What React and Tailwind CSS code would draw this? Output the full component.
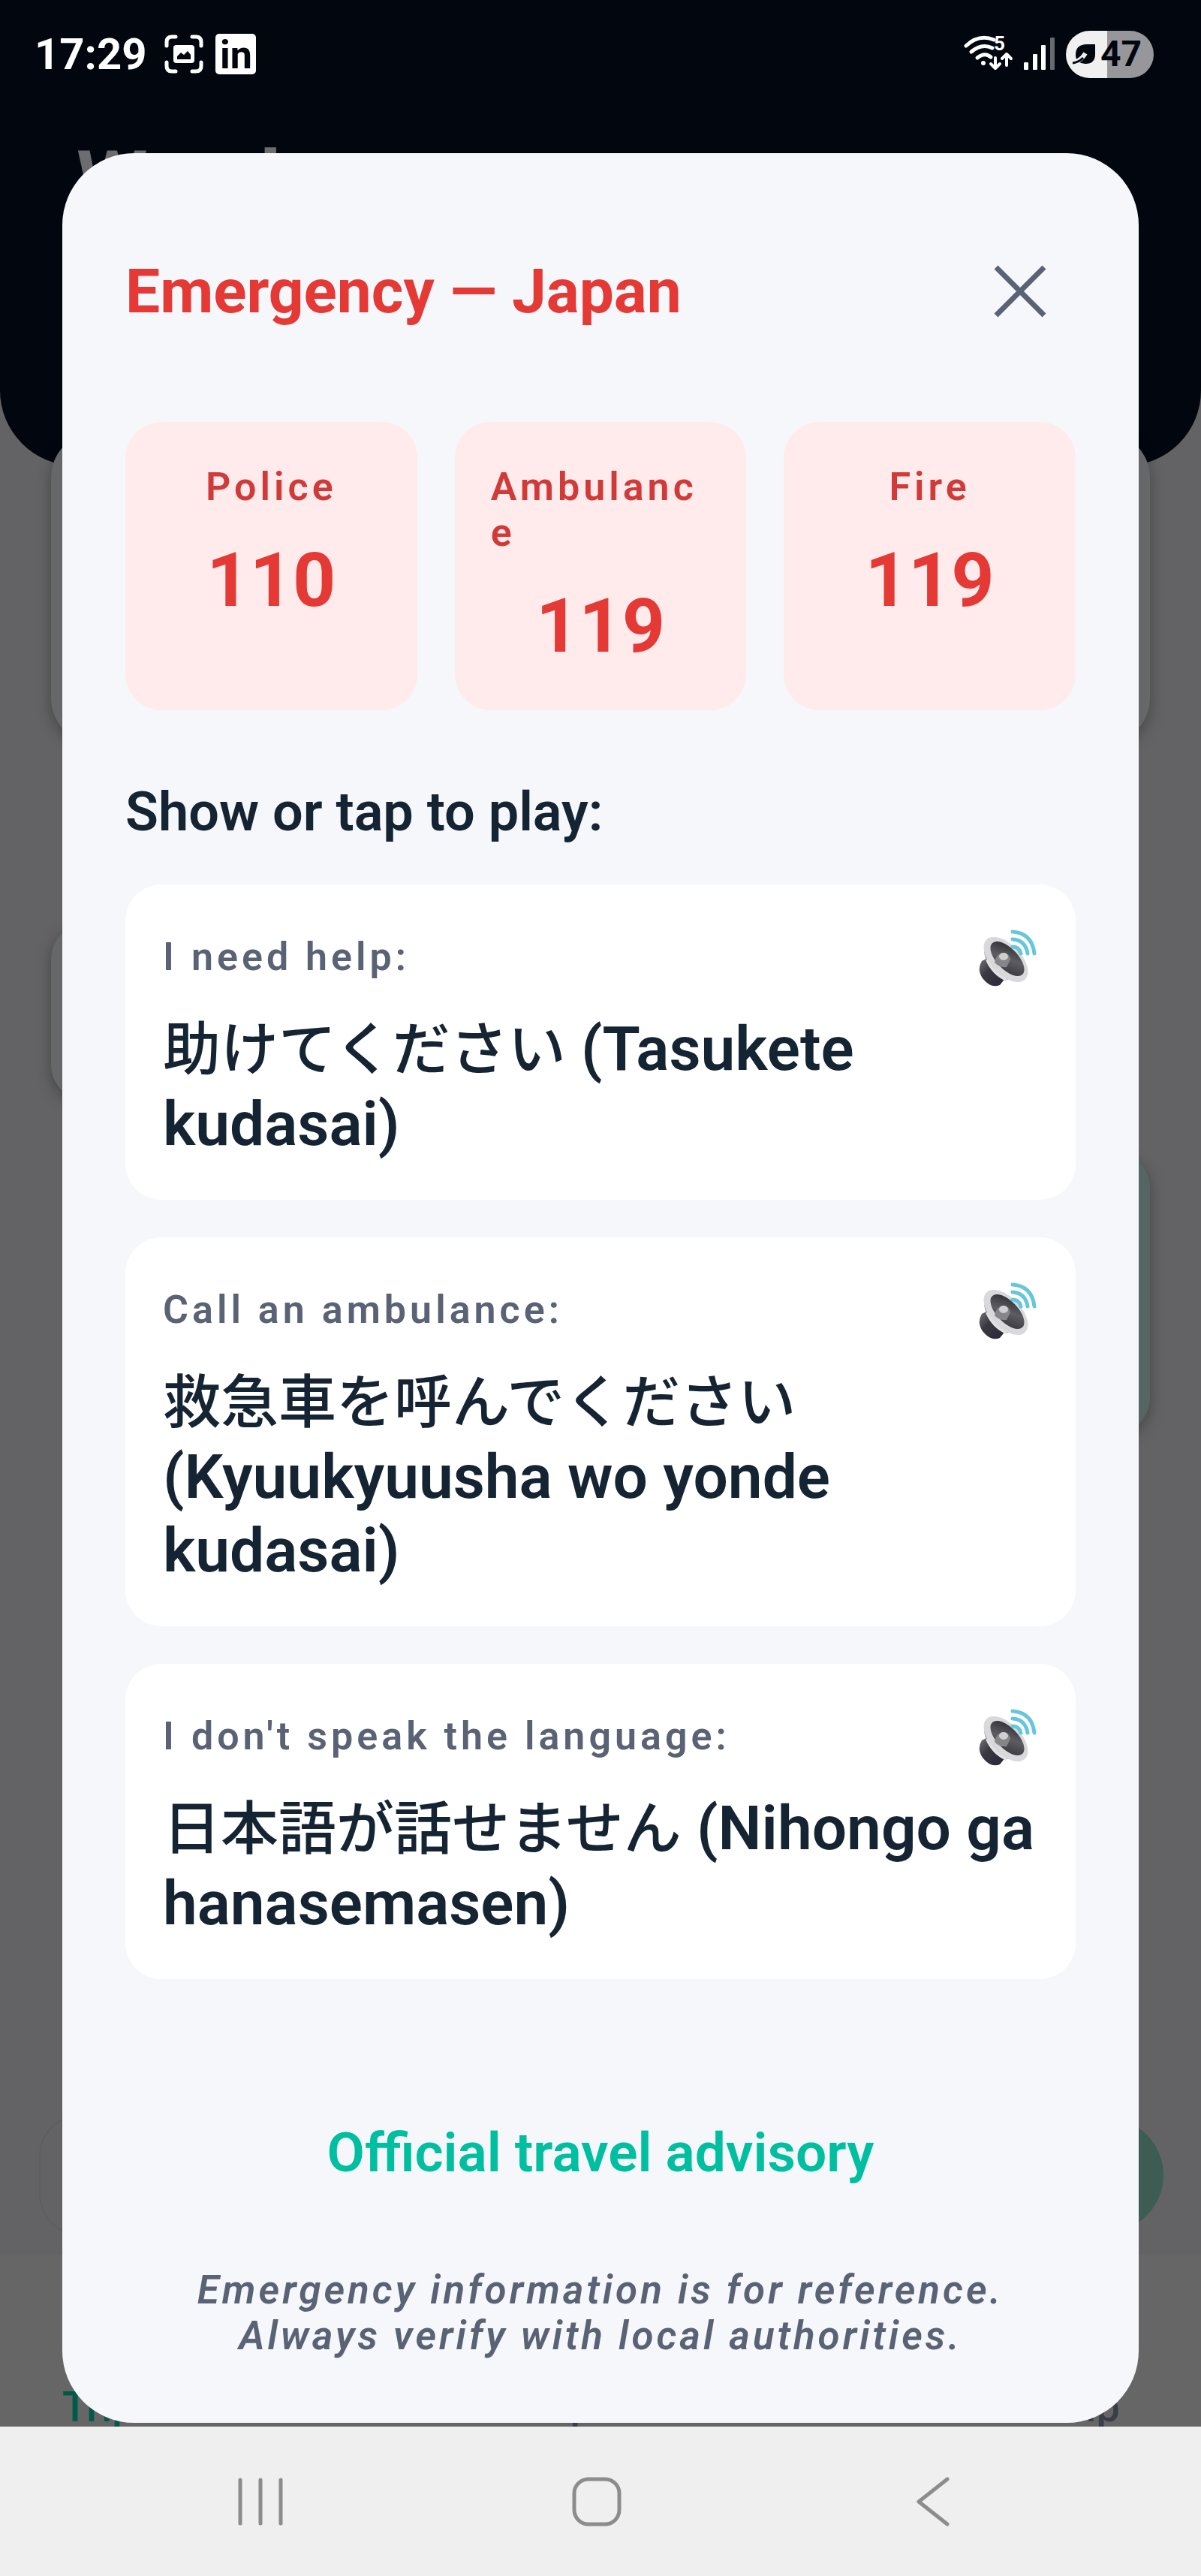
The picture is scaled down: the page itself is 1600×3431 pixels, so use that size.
const numbers = [
  { label: "Police", value: "110" },
  { label: "Ambulance", value: "119" },
  { label: "Fire", value: "119" },
];

const phrases = [
  { label: "I need help:", ja: "助けてください", romaji: "(Tasukete kudasai)" },
  { label: "Call an ambulance:", ja: "救急車を呼んでください", romaji: "(Kyuukyuusha wo yonde kudasai)" },
  { label: "I don't speak the language:", ja: "日本語が話せません", romaji: "(Nihongo ga hanasemasen)" },
];

function ScreenshotIcon() {
  return (
    <svg viewBox="0 0 52 52" className="size-[52px]" fill="none" stroke="#fff" strokeWidth="5" strokeLinecap="round">
      <path d="M3 15V10Q3 3 10 3H15M37 3H42Q49 3 49 10V15M49 37V42Q49 49 42 49H37M15 49H10Q3 49 3 42V37" />
      <rect x="12" y="14" width="28" height="24" rx="4" fill="#fff" stroke="none" />
      <path d="M17 33V29L22 24L26 27L31 22L35 27V33Z" fill="#02060f" stroke="none" />
    </svg>
  );
}

function WifiIcon() {
  return (
    <div className="relative">
      <svg viewBox="0 0 66 50" className="h-[50px] w-[66px]" fill="none" stroke="#fff" strokeWidth="5" strokeLinecap="round" strokeLinejoin="round">
        <path d="M3 14Q20 -2 40 6" />
        <path d="M10 22Q24 10 38 17" />
        <path d="M18 30Q28 22 36 29" />
        <circle cx="26" cy="37" r="3" fill="#fff" stroke="none" />
        <path d="M42 30V43M36 38L42 44L48 38" strokeWidth="4" />
        <path d="M57 40V27M51 31L57 25L63 31" strokeWidth="4" />
      </svg>
      <span className="absolute top-0 left-10 text-[26px] leading-[22px] font-bold">5</span>
    </div>
  );
}

function SpeakerIcon() {
  return (
    <svg viewBox="0 0 80 80" className="size-20">
      <defs>
        <linearGradient id="cone" x1="0" y1="0" x2="1" y2="1">
          <stop offset="0" stopColor="#26262b" />
          <stop offset="0.5" stopColor="#5c5c62" />
          <stop offset="1" stopColor="#303036" />
        </linearGradient>
        <linearGradient id="magnet" x1="0" y1="0" x2="1" y2="1">
          <stop offset="0" stopColor="#77777c" />
          <stop offset="0.4" stopColor="#3a3940" />
          <stop offset="1" stopColor="#28253a" />
        </linearGradient>
      </defs>
      <path d="M5 44Q-2 55 6 67Q17 81 29 76L37 66L15 39Z" fill="url(#magnet)" />
      <path d="M8 32Q12 58 38 69L52 68L16 26Z" fill="#a3a3a8" />
      <path d="M12 42Q20 61 38 69" stroke="#e2e2e5" strokeWidth="4" fill="none" />
      <ellipse cx="37" cy="42" rx="37" ry="20" transform="rotate(46 37 42)" fill="#d9d9db" />
      <ellipse cx="39" cy="41" rx="29" ry="14" transform="rotate(46 39 41)" fill="url(#cone)" />
      <path d="M22 46Q24 34 34 33Q42 34 43 42L38 52Q28 53 22 46Z" fill="#85858a" />
      <ellipse cx="34" cy="38" rx="6" ry="5" fill="#cfcfd2" />
      <g fill="none" stroke="#68c6da" strokeWidth="5" strokeLinecap="round">
        <path d="M46 25Q55 25 57 34" />
        <path d="M46 15Q63 16 66 34" />
        <path d="M46 5Q72 7 75 34" />
      </g>
    </svg>
  );
}

function StatusBar() {
  return (
    <div className="flex h-[144px] items-center justify-between pr-[63px] pl-[46px] text-white">
      <div className="flex items-center gap-6">
        <span className="text-[58px] leading-none font-bold">17:29</span>
        <div className="flex items-center gap-4">
          <ScreenshotIcon />
          <span className="flex h-[54px] w-[54px] items-end justify-center rounded-[5px] bg-white text-[52px] leading-[50px] font-bold text-[#02060f]">in</span>
        </div>
      </div>
      <div className="flex items-center gap-[14px]">
        <WifiIcon />
        <svg viewBox="0 0 42 44" className="h-11 w-[42px]" fill="#fff">
          <rect x="0" y="33" width="6" height="10" rx="1" />
          <rect x="12" y="22" width="6" height="21" rx="1" />
          <rect x="23" y="10" width="6" height="33" rx="1" />
          <rect x="35" y="0" width="6" height="43" rx="1" opacity="0.4" />
        </svg>
        <div className="flex h-[63px] w-[117px] items-center gap-[6px] rounded-full bg-linear-to-r from-[#f0f0f0] from-47% to-[#97979b] to-47% pl-2">
          <svg viewBox="0 0 32 28" className="h-7 w-8">
            <path d="M31 1V14Q31 27 18 27Q5 26 5 15Q5 1 20 1Z" fill="#02060f" />
            <path d="M1 26Q12 23 18 13" stroke="#f0f0f0" strokeWidth="6" fill="none" />
            <path d="M1 26Q9 25 15 19" stroke="#02060f" strokeWidth="3" fill="none" />
          </svg>
          <span className="text-[48px] leading-none font-bold text-[#02060f]">47</span>
        </div>
      </div>
    </div>
  );
}

// the home screen, dimmed behind the dialog
function Backdrop() {
  return (
    <div aria-hidden="true" className="absolute inset-0 flex flex-col bg-[#636365]">
      <div className="h-[620px] rounded-b-[100px] bg-[#02060f] px-[102px] pt-[180px]">
        <p className="text-[108px] leading-[120px] font-bold text-[#6d6d70]">Wander</p>
      </div>
      <div className="mx-[68px] -mt-[44px] h-[414px] rounded-[60px] bg-[#666768] shadow-[0_6px_20px_rgba(0,0,0,0.3)]" />
      <div className="mt-[240px] mr-[50%] ml-[68px] h-[236px] rounded-[48px] bg-[#666768] shadow-[0_6px_20px_rgba(0,0,0,0.3)]" />
      <div className="mt-[68px] mr-[68px] ml-[50%] h-[376px] rounded-[48px] bg-[#556563] shadow-[0_6px_20px_rgba(0,0,0,0.3)]" />
      <div className="grow" />
      <div className="mb-[25px] flex items-center justify-between pr-[50px] pl-[52px]">
        <div className="h-[162px] w-3/4 rounded-[56px] border-2 border-[#5e5e61]" />
        <div className="size-[152px] rounded-full bg-[#3c5c54]" />
      </div>
      <div className="flex h-[229px] items-end justify-between bg-[#666] pr-[108px] pl-[83px] text-[56px] leading-[52px] font-medium text-[#3a3e4a]">
        <span className="text-[#005a4a]">Trips</span>
        <span>Explore</span>
        <span>Help</span>
      </div>
    </div>
  );
}

function NumberCard({ label, value }) {
  return (
    <a href={`tel:${value}`} className="flex flex-1 basis-0 flex-col items-center rounded-[48px] bg-[#ffebec] px-[48px] pt-[56px] pb-[50px]">
      <span className="text-[52px] leading-[61px] font-semibold tracking-[5px] break-all text-[#d03a38]">{label}</span>
      <span className="mt-8 text-[100px] leading-[124px] font-bold text-[#e53935]">{value}</span>
    </a>
  );
}

function PhraseCard({ label, ja, romaji }) {
  return (
    <button type="button" className="block w-full rounded-[48px] bg-white px-[50px] pt-[58px] pb-[52px] text-left">
      <span className="flex items-start justify-between">
        <span className="pt-2 text-[52px] leading-[61px] font-semibold tracking-[5px] text-[#5a6275]">{label}</span>
        <SpeakerIcon />
      </span>
      <span className="mt-8 block text-[82px] leading-[98px] font-semibold text-[#152433]">
        <span lang="ja" className="text-[77px] font-medium">{ja}</span> {romaji}
      </span>
    </button>
  );
}

function EmergencyDialog() {
  return (
    <section role="dialog" aria-label="Emergency numbers" className="mx-[83px] mt-[60px] rounded-[96px] bg-[#f5f7fb] px-[84px] pt-[126px] pb-[85px]">
      <header className="flex items-center justify-between pr-[38px]">
        <h1 className="text-[82px] leading-[116px] font-bold text-[#e53935]">Emergency — Japan</h1>
        <button type="button" aria-label="Close">
          <svg viewBox="0 0 72 72" className="size-[72px]" stroke="#5a6275" strokeWidth="7"><path d="M4 4L68 68M68 4L4 68" /></svg>
        </button>
      </header>
      <div className="mt-[116px] flex gap-[50px]">
        {numbers.map((n) => <NumberCard key={n.label} {...n} />)}
      </div>
      <h2 className="mt-[88px] text-[72px] leading-[96px] font-semibold text-[#152433]">Show or tap to play:</h2>
      <div className="mt-[48px] flex flex-col gap-[50px]">
        {phrases.map((p) => <PhraseCard key={p.label} {...p} />)}
      </div>
      <a href="#advisory" className="mt-[183px] block text-center text-[73px] leading-[96px] font-semibold text-[#00bfa0]">Official travel advisory</a>
      <p className="mt-[105px] px-[60px] text-center text-[53px] leading-[61px] font-semibold tracking-[4px] text-[#5a6275] italic">Emergency information is for reference. Always verify with local authorities.</p>
    </section>
  );
}

function NavBar() {
  return (
    <nav className="flex h-[200px] items-center justify-between bg-[#efefef] pr-[334px] pl-[314px]">
      <button type="button" aria-label="Recent apps">
        <svg viewBox="0 0 66 64" className="h-16 w-[66px]" stroke="#8c8c8c" strokeWidth="5" strokeLinecap="round"><path d="M6 3V61M33 3V61M60 3V61" /></svg>
      </button>
      <button type="button" aria-label="Home">
        <svg viewBox="0 0 66 66" className="size-[66px]" fill="none" stroke="#8c8c8c" strokeWidth="5"><rect x="3" y="3" width="60" height="60" rx="19" /></svg>
      </button>
      <button type="button" aria-label="Back">
        <svg viewBox="0 0 56 66" className="h-[66px] w-14" fill="none" stroke="#8c8c8c" strokeWidth="5" strokeLinecap="round" strokeLinejoin="round"><path d="M52 3L14 33L52 63" /></svg>
      </button>
    </nav>
  );
}

export default function App() {
  return (
    <div className="font-[Roboto,'Noto_Sans_CJK_JP',sans-serif]">
      <main className="relative overflow-hidden pb-[5px]">
        <Backdrop />
        <div className="relative">
          <StatusBar />
          <EmergencyDialog />
        </div>
      </main>
      <NavBar />
    </div>
  );
}
